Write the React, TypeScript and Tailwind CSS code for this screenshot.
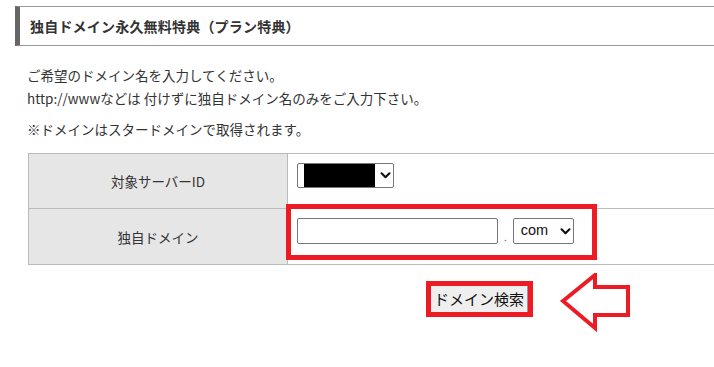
import React from "react";

function Chevron({ className }: { className?: string }) {
  return (
    <svg viewBox="0 0 12 8" className={className} fill="none" stroke="#111" strokeWidth={2.4} strokeLinecap="round" strokeLinejoin="round">
      <polyline points="1.5,1.5 6,6 10.5,1.5" />
    </svg>
  );
}

export default function App() {
  const jp = { fontFamily: '"Noto Sans CJK JP", "Noto Sans", sans-serif' };
  return (
    <div className="w-[714px] h-[367px] bg-white overflow-hidden text-[#333]" style={jp}>
      <div className="pt-[6px] pl-[15px]">
        <div className="h-[40px] border-y border-[#999] border-l-[5px] border-l-[#666] flex items-center pl-[10px] text-[14px] font-bold text-[#333] tracking-[0.2px]">
          独自ドメイン永久無料特典（プラン特典）
        </div>
      </div>

      <div className="pl-[27px] pt-[18px] text-[13.5px] leading-[23px]">
        <p>ご希望のドメイン名を入力してください。</p>
        <p>http://wwwなどは 付けずに独自ドメイン名のみをご入力下さい。</p>
        <p className="mt-[8px]">※ドメインはスタードメインで取得されます。</p>
      </div>

      <div className="ml-[28px] mt-[12px] border-t border-b border-[#bbb]">
        <div className="grid grid-cols-[260px_1fr] h-[54px]">
          <div className="bg-[#e6e6e6] border-l border-r border-[#bbb] flex items-center justify-center text-[13.5px] pt-[1px]">
            対象サーバーID
          </div>
          <div className="flex items-start pl-[9px] pt-[9px]">
            <div className="w-[97px] h-[25px] border border-[#767676] rounded-[2px] flex items-center bg-white">
              <div className="ml-[6px] w-[71px] h-[23px] bg-black" />
              <Chevron className="ml-[5px] w-[11px] h-[7px]" />
            </div>
          </div>
        </div>
        <div className="grid grid-cols-[260px_1fr] h-[56px] border-t border-[#bbb]">
          <div className="bg-[#e6e6e6] border-l border-r border-[#bbb] flex items-center justify-center text-[13.5px] pt-[2px]">
            独自ドメイン
          </div>
          <div className="relative flex items-start pl-[9px] pt-[9px]">
            <div className="w-[201px] h-[26px] border border-[#767676] rounded-[2px] bg-white" />
            <span className="mx-[6px] mt-[14px] text-[10px] leading-none text-[#555]">.</span>
            <div className="w-[61px] h-[26px] border border-[#767676] rounded-[2px] bg-white flex items-center pl-[7px] text-[14.5px] text-[#111]" style={{ fontFamily: '"Liberation Sans", Arial, sans-serif' }}>
              com
              <Chevron className="ml-[12px] w-[11px] h-[7px]" />
            </div>
            <div className="absolute left-[-2px] top-[-5px] w-[311px] h-[56px] border-[5px] border-[#ed1c24] pointer-events-none" />
          </div>
        </div>
      </div>

      <div className="flex items-start pl-[426px] pt-[8px]">
        <div className="mt-[8px] border-[5px] border-[#ed1c24] flex">
          <div className="w-[97px] h-[26px] bg-[#efefef] border-r border-[#999] flex items-center justify-center text-[15px] text-[#111]">
            ドメイン検索
          </div>
        </div>
        <svg width="72" height="60" viewBox="0 0 72 60" className="ml-[27px]">
          <polygon
            points="3,28 35,2 35,14 68,14 68,42 35,42 35,55"
            fill="none"
            stroke="#ed1c24"
            strokeWidth={4}
            strokeLinejoin="miter"
          />
        </svg>
      </div>
    </div>
  );
}
